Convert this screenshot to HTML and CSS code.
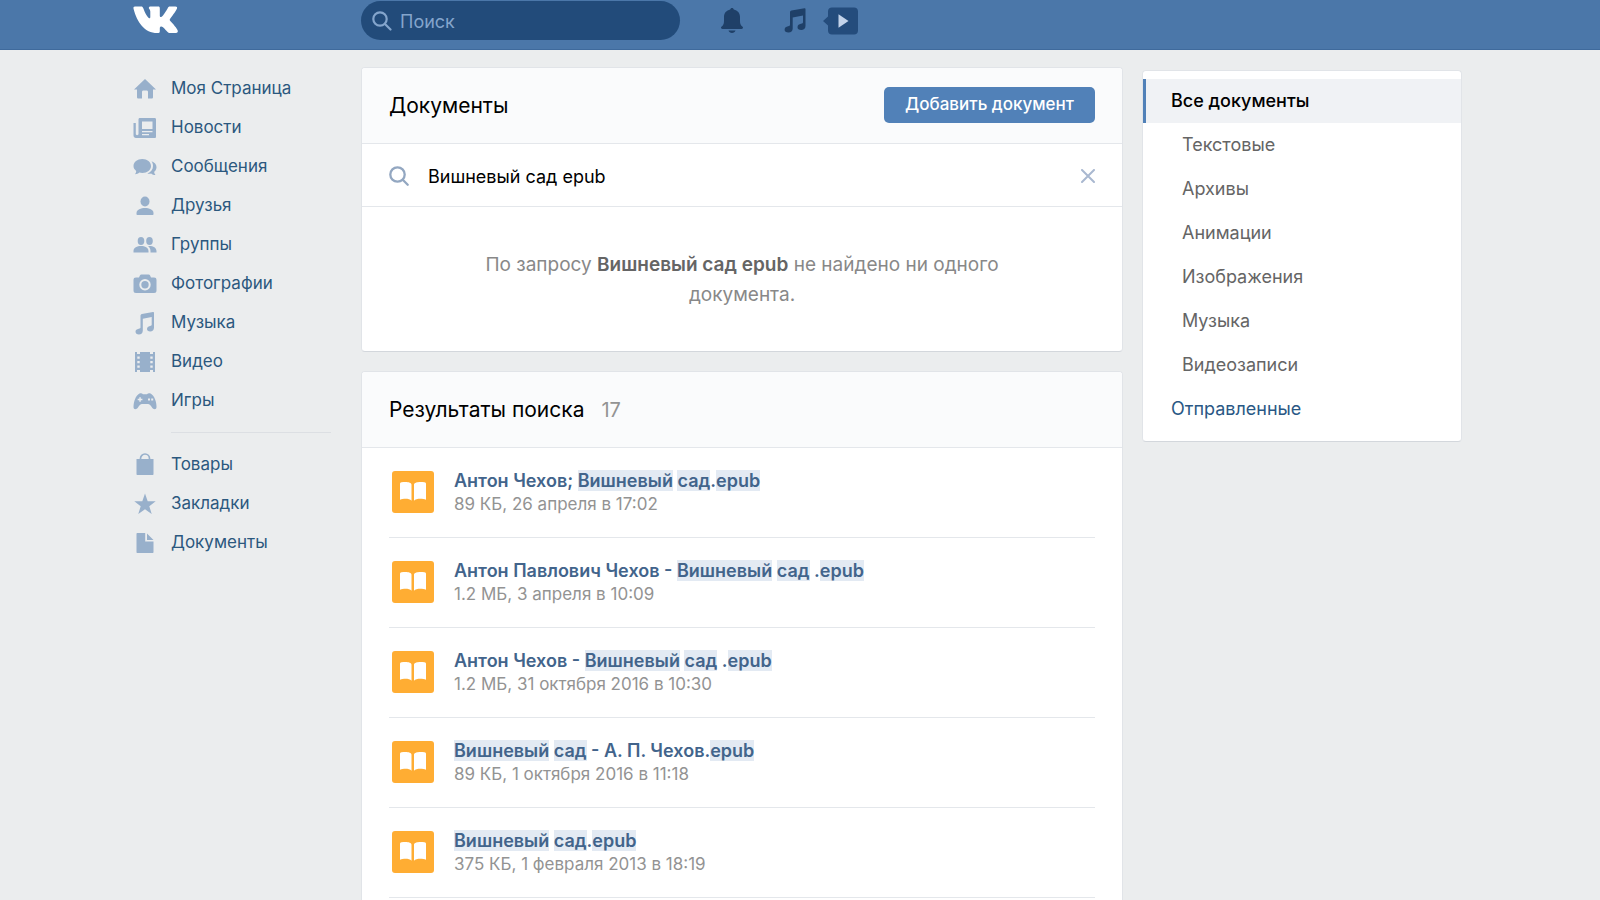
FILE: index.html
```html
<!DOCTYPE html>
<html lang="ru">
<head>
<meta charset="utf-8">
<title>Документы</title>
<link rel="stylesheet" href="styles.css">
</head>
<body>
<header class="topbar">
  <a class="logo" href="#" aria-label="ВКонтакте">
    <svg width="46" height="28" viewBox="0 0 46 28" fill="#fff"><path d="M2 0.500h6.300c1 0 1.500.500 1.900 1.600 1.700 5 4.800 10.200 6.200 10.200.600 0 .900-.400.900-1.900V5.600c-.200-2.400-1.500-2.600-1.500-3.500 0-.900.700-1.600 1.700-1.600h7.700c1.200 0 1.600.600 1.600 1.900v7c0 1.200.500 1.600.900 1.600.600 0 1.200-.400 2.300-1.600 2.500-3 4.700-7.200 4.700-7.200.400-1 1.100-1.700 2.300-1.700h5.400c1.600 0 2 .900 1.600 2-.700 2.300-6.700 10-6.700 10-.700 1-.9 1.500 0 2.600 3.200 3.300 6.500 7.200 7.400 9.500.5 1.500-.3 2.400-1.800 2.400h-6.100c-1.700 0-2.200-.9-5.200-4.200-1.500-1.600-2.500-2.300-3.200-2.300-1 0-1.600.3-1.600 2.200v2.500c0 1.300-.4 1.800-2.600 1.800C11.500 27 4.200 16.500.6 3 .200 1.300.6.500 2 .500Z"/></svg>
  </a>
  <div class="topbar-main">
    <label class="search">
      <svg width="20" height="20" viewBox="0 0 20 20" fill="none" stroke="#84a5cc" stroke-width="2.200" stroke-linecap="round"><circle cx="8" cy="8" r="6.700"/><path d="M13 13l5.500 5.500"/></svg>
      <input type="search" placeholder="Поиск" aria-label="Поиск">
    </label>
    <button class="top-btn bell" aria-label="Уведомления">
      <svg width="24" height="26" viewBox="0 0 24 26" fill="#1f4068"><path d="M12 0c1 0 1.600.600 1.800 1.500C17.500 2.300 20 5 20 9v4c0 3 .8 4.200 2 5.200.8.600 1.200 1 .9 1.800-.2.700-.7 1-1.500 1H2.600c-.8 0-1.300-.3-1.500-1-.3-.8.100-1.200.9-1.800 1.200-1 2-2.200 2-5.200V9c0-4 2.500-6.700 6.200-7.500C10.400.600 11 0 12 0ZM8.500 22.500h7c-.4 1.500-1.800 2.500-3.500 2.500s-3.100-1-3.500-2.500Z"/></svg>
    </button>
    <button class="top-btn note" aria-label="Музыка">
      <svg width="22" height="25" viewBox="0 0 22 25" fill="#1f4068"><path d="M6 4.500c0-1 .4-1.600 1.500-1.900L20.500.200c.7-.1 1 .2 1 .8V18c0 2.700-1.800 4-4.300 4-2.300 0-3.700-1-3.700-2.800 0-2 1.500-3 3.500-3.400 1.500-.3 2-.6 2-1.700V7.600L8.700 9.400V20.500c0 2.700-1.700 4-4.200 4-2.400 0-3.900-1-3.900-2.800 0-2 1.500-3 3.500-3.400 1.400-.3 1.900-.6 1.900-1.700Z"/></svg>
    </button>
    <button class="top-btn" aria-label="Воспроизвести">
      <svg width="35" height="28" viewBox="0 0 35 28"><path d="M0 14l5-4.500V4.500C5 2 6.500.500 9 .500h22c2.500 0 4 1.500 4 4v19c0 2.500-1.500 4-4 4H9c-2.500 0-4-1.500-4-4v-5Z" fill="#244c7c"/><path d="M15.500 7.300v13.400L25.500 14Z" fill="#c3d3ea"/></svg>
    </button>
  </div>
</header>

<div class="page">
  <nav class="side">
    <a href="#"><svg viewBox="0 0 24 24"><path d="M12 2l11 10.500h-3V20c0 1-.5 1.500-1.500 1.500H15V15c0-1-.5-1.500-1.500-1.500h-3C9.500 13.500 9 14 9 15v6.500H5.500C4.500 21.500 4 21 4 20v-7.500H1Z"/></svg>Моя Страница</a>
    <a href="#"><svg viewBox="0 0 24 24"><path fill-rule="evenodd" d="M7 2h14.500c1 0 1.500.5 1.500 1.500v17c0 1-.5 1.500-1.500 1.500H3c-1.500 0-2.500-1-2.500-2.500V7h2.300v11c0 1.500 2.700 1.500 2.700 0V3.500C5.500 2.500 6 2 7 2ZM9 5.500V13h10.500V5.500ZM9 15v1.300h10.500V15Zm0 3v1.300h7V18Z"/></svg>Новости</a>
    <a href="#"><svg viewBox="0 0 24 24"><path d="M9.300 4C14.300 4 18 7 18 11s-3.700 7-8.700 7c-1 0-2-.1-3-.4-1 .9-2.600 1.600-4.300 1.600.8-.9 1.200-2 1.200-3.300C1.500 14.600.5 13 .5 11 .5 7 4.300 4 9.300 4Z"/><path d="M18.500 6.200c3 .9 5 3.200 5 6 0 1.900-.9 3.400-2.300 4.600 0 1.200.5 2.300 1.300 3.200-1.700 0-3.300-.7-4.300-1.600-1.200.3-2.500.4-3.800.1 3.600-1.300 5.600-4.100 5.600-7.500 0-1.700-.5-3.400-1.500-4.800Z"/></svg>Сообщения</a>
    <a href="#"><svg viewBox="0 0 24 24"><ellipse cx="12" cy="7.500" rx="4.500" ry="5"/><path d="M3.500 19c0-3.500 4.500-5 8.500-5s8.500 1.500 8.500 5v1c0 .7-.3 1-1 1h-15c-.7 0-1-.3-1-1Z"/></svg>Друзья</a>
    <a href="#"><svg viewBox="0 0 24 24"><ellipse cx="8" cy="8" rx="3.300" ry="4"/><ellipse cx="16.500" cy="8" rx="3.300" ry="4"/><path d="M.5 18c0-3.200 3.500-5 7.500-5s7.500 1.800 7.500 5v1.500H.5ZM15 13c4.500-.5 8.500 1.500 8.500 5v1.500h-6V18c0-2-1-3.800-2.500-5Z"/></svg>Группы</a>
    <a href="#"><svg viewBox="0 0 24 24"><path fill-rule="evenodd" d="M8.500 2.500h7c.8 0 1.300.3 1.600 1L18 5.500h3c1.700 0 2.500.8 2.500 2.500v10.500c0 1.700-.8 2.500-2.500 2.500H3C1.300 21 .5 20.200.5 18.500V8C.5 6.300 1.300 5.500 3 5.500h3l.9-2c.3-.7.800-1 1.600-1ZM12 7a5.700 5.700 0 100 11.400A5.700 5.700 0 0012 7Zm0 2a3.700 3.700 0 110 7.400A3.700 3.700 0 0112 9Z"/></svg>Фотографии</a>
    <a href="#"><svg viewBox="0 0 24 24"><path d="M7.500 4.800c0-1 .4-1.500 1.400-1.800L20 1c.7-.1 1 .2 1 .8v15c0 2.400-1.600 3.600-3.800 3.600-2 0-3.200-.9-3.200-2.500s1.200-2.600 3-3c1.300-.3 1.700-.5 1.700-1.500V6L9.800 7.700v11.700c0 2.600-1.500 4-3.900 4-2.100 0-3.400-1-3.400-2.600 0-1.700 1.300-2.600 3.200-3 1.300-.3 1.800-.6 1.800-1.600Z"/></svg>Музыка</a>
    <a href="#"><svg viewBox="0 0 24 24"><path fill-rule="evenodd" d="M2 2h2v2h3V2h10v2h3V2h2v20h-2v-2h-3v2H7v-2H4v2H2Zm2.300 4.500v2.300h2.400V6.500Zm0 4.500v2.300h2.400V11Zm0 4.500v2.300h2.400v-2.300Zm13-9v2.300h2.400V6.500Zm0 4.500v2.300h2.400V11Zm0 4.500v2.300h2.400v-2.300Z"/></svg>Видео</a>
    <a href="#"><svg viewBox="0 0 24 24"><path fill-rule="evenodd" d="M6.500 4.500c1.500-.8 2.700-.2 3.500.7h4c.8-.9 2-1.500 3.500-.7C21.500 6.500 23.500 13 23.500 18c0 2.800-3 2.800-4.500.5-1.300-2-2.500-3.500-4-3.500H9c-1.500 0-2.700 1.500-4 3.500-1.500 2.300-4.500 2.300-4.500-.5C.5 13 2.500 6.500 6.500 4.500Zm-.2 3.700v1.600H4.700v1.400h1.600v1.600h1.500v-1.600h1.600V9.800H7.800V8.200Zm8.700 1.300v2h2v-2Zm3.200 0v2h2v-2Z"/></svg>Игры</a>
    <hr>
    <a href="#"><svg viewBox="0 0 24 24"><path d="M3.500 6h17v15c0 .7-.3 1-1 1h-15c-.7 0-1-.3-1-1Z"/><path d="M7.500 7V5.500a4.500 4.500 0 019 0V7" fill="none" stroke="#98b0cb" stroke-width="1.700"/></svg>Товары</a>
    <a href="#"><svg viewBox="0 0 24 24"><path d="M12 1.500l2.700 7.700 8 .1-6.400 4.900 2.400 7.800-6.700-4.700L5.300 22l2.400-7.800L1.300 9.300l8-.1Z"/></svg>Закладки</a>
    <a href="#"><svg viewBox="0 0 24 24"><path d="M4.500 2h7.700v8.500h8.300V21c0 .7-.3 1-1 1h-15c-.7 0-1-.3-1-1V3c0-.7.300-1 1-1Z"/><path d="M14 2.500L20.500 9H14Z"/></svg>Документы</a>
  </nav>

  <main class="main">
    <section class="card">
      <div class="card-head">
        <h1>Документы</h1>
        <button class="add">Добавить документ</button>
      </div>
      <div class="query">
        <svg width="20" height="20" viewBox="0 0 20 20" fill="none" stroke="#93a7c1" stroke-width="2.300" stroke-linecap="round"><circle cx="8.500" cy="8.500" r="7.200"/><path d="M14 14l4.700 4.700"/></svg>
        <input type="text" value="Вишневый сад epub" aria-label="Поиск документов">
        <button class="clear" aria-label="Очистить"><svg width="14" height="14" viewBox="0 0 14 14" fill="none" stroke="#a9b8d0" stroke-width="2" stroke-linecap="round"><path d="M1 1l12 12M13 1L1 13"/></svg></button>
      </div>
      <p class="empty">По запросу <b>Вишневый сад epub</b> не найдено ни одного<br>документа.</p>
    </section>

    <section class="card">
      <div class="card-head">
        <h2>Результаты поиска</h2><span class="count">17</span>
      </div>
      <ul class="docs">
        <li><svg class="book" viewBox="0 0 42 42"><rect width="42" height="42" rx="3" fill="#ffad33"/><path d="M8 13c0-1 .5-1.500 1.500-1.700 4-.8 10-.6 10 2.400v16c-2-2.500-8-2.500-11.500-1Z M34 13c0-1-.5-1.500-1.500-1.700-4-.8-10.500-.6-10.500 2.400v16c2-2.500 8.500-2.500 12-1Z" fill="#fff"/></svg>
          <div><a href="#">Антон Чехов; <mark>Вишневый</mark> <mark>сад</mark>.<mark>epub</mark></a><small>89 КБ, 26 апреля в 17:02</small></div></li>
        <li><svg class="book" viewBox="0 0 42 42"><rect width="42" height="42" rx="3" fill="#ffad33"/><path d="M8 13c0-1 .5-1.500 1.500-1.700 4-.8 10-.6 10 2.400v16c-2-2.500-8-2.500-11.500-1Z M34 13c0-1-.5-1.500-1.500-1.700-4-.8-10.500-.6-10.500 2.400v16c2-2.500 8.500-2.500 12-1Z" fill="#fff"/></svg>
          <div><a href="#">Антон Павлович Чехов - <mark>Вишневый</mark> <mark>сад</mark> .<mark>epub</mark></a><small>1.2 МБ, 3 апреля в 10:09</small></div></li>
        <li><svg class="book" viewBox="0 0 42 42"><rect width="42" height="42" rx="3" fill="#ffad33"/><path d="M8 13c0-1 .5-1.500 1.500-1.700 4-.8 10-.6 10 2.400v16c-2-2.500-8-2.500-11.500-1Z M34 13c0-1-.5-1.500-1.500-1.700-4-.8-10.500-.6-10.500 2.400v16c2-2.500 8.500-2.500 12-1Z" fill="#fff"/></svg>
          <div><a href="#">Антон Чехов - <mark>Вишневый</mark> <mark>сад</mark> .<mark>epub</mark></a><small>1.2 МБ, 31 октября 2016 в 10:30</small></div></li>
        <li><svg class="book" viewBox="0 0 42 42"><rect width="42" height="42" rx="3" fill="#ffad33"/><path d="M8 13c0-1 .5-1.500 1.500-1.700 4-.8 10-.6 10 2.400v16c-2-2.500-8-2.500-11.500-1Z M34 13c0-1-.5-1.500-1.500-1.700-4-.8-10.500-.6-10.500 2.400v16c2-2.500 8.500-2.500 12-1Z" fill="#fff"/></svg>
          <div><a href="#"><mark>Вишневый</mark> <mark>сад</mark> - А. П. Чехов.<mark>epub</mark></a><small>89 КБ, 1 октября 2016 в 11:18</small></div></li>
        <li><svg class="book" viewBox="0 0 42 42"><rect width="42" height="42" rx="3" fill="#ffad33"/><path d="M8 13c0-1 .5-1.500 1.500-1.700 4-.8 10-.6 10 2.400v16c-2-2.500-8-2.500-11.500-1Z M34 13c0-1-.5-1.500-1.500-1.700-4-.8-10.500-.6-10.500 2.400v16c2-2.500 8.500-2.500 12-1Z" fill="#fff"/></svg>
          <div><a href="#"><mark>Вишневый</mark> <mark>сад</mark>.<mark>epub</mark></a><small>375 КБ, 1 февраля 2013 в 18:19</small></div></li>
      </ul>
    </section>
  </main>

  <nav class="card filter" aria-label="Типы документов">
    <a class="active" href="#">Все документы</a>
    <a class="sub" href="#">Текстовые</a>
    <a class="sub" href="#">Архивы</a>
    <a class="sub" href="#">Анимации</a>
    <a class="sub" href="#">Изображения</a>
    <a class="sub" href="#">Музыка</a>
    <a class="sub" href="#">Видеозаписи</a>
    <a class="sent" href="#">Отправленные</a>
  </nav>
</div>
</body>
</html>
```
FILE: styles.css
```css
* { box-sizing: border-box; }
body {
  margin: 0;
  background: #ebedee;
  font-family: Inter, Roboto, "Liberation Sans", sans-serif;
  font-size: 18px;
  line-height: 23px;
  color: #000;
}
a { text-decoration: none; color: inherit; }
button, input { font: inherit; border: 0; background: none; padding: 0; margin: 0; }
button { cursor: pointer; }
svg { display: block; flex: none; }

.topbar {
  display: flex;
  height: 50px;
  padding: 0 138px 0 133px;
  background: #4b77a9;
  border-bottom: 1px solid #3f6a9c;
}
.logo { width: 228px; padding-top: 6px; }
.topbar-main { display: flex; align-items: center; height: 41px; }
.search {
  display: flex;
  align-items: center;
  gap: 8px;
  width: 319px;
  height: 39px;
  margin-right: 40px;
  padding: 1px 20px 0 11px;
  border-radius: 20px;
  background: #224b7a;
}
.search input { flex: 1; min-width: 0; color: #fff; outline: none; }
.search input::placeholder { color: #84a5cc; opacity: 1; }
.bell { margin-right: 40px; }
.note { margin-right: 17px; }

.page {
  display: flex;
  align-items: flex-start;
  padding: 17px 138px 0 133px;
}
.side { width: 228px; padding-top: 2px; font-size: 17px; color: #2b587e; }
.side a { display: flex; align-items: center; gap: 14px; height: 39px; }
.side svg { width: 24px; height: 24px; fill: #98b0cb; }
.side hr { margin: 12px 30px 12px 38px; border: 0; border-top: 1px solid #dcdfe3; }

.main { flex: 1; min-width: 0; margin-right: 19px; }
.card {
  background: #fff;
  border: 1px solid #e1e4e8;
  border-bottom-color: #d3d7dc;
  border-radius: 4px;
}
.main .card { margin-bottom: 19px; }
.card-head {
  display: flex;
  align-items: center;
  height: 76px;
  padding: 0 27px;
  border-bottom: 1px solid #e4e7eb;
  border-radius: 3px 3px 0 0;
  background: #fafbfc;
}
h1, h2 { margin: 0; font-size: 21px; font-weight: 400; line-height: 30px; }
.count { margin-left: 17px; font-size: 20px; line-height: 30px; color: #939393; }
.add {
  height: 36px;
  margin: 0 0 2px auto;
  padding: 0 21px;
  border-radius: 5px;
  background: #5181b8;
  color: #fff;
  font-size: 17px;
  font-weight: 500;
}
.query {
  display: flex;
  align-items: center;
  height: 63px;
  padding: 2px 27px 0;
  border-bottom: 1px solid #e4e7eb;
}
.query input { flex: 1; min-width: 0; margin-left: 19px; outline: none; }
.empty {
  max-width: 600px;
  margin: 0 auto;
  padding: 43px 20px 41px;
  font-size: 19px;
  line-height: 30px;
  text-align: center;
  color: #888;
}
.empty b { font-weight: 600; color: #656565; }

.docs { list-style: none; margin: 0; padding: 0 27px 27px; }
.docs li { display: flex; height: 90px; padding: 21px 0 0 3px; border-bottom: 1px solid #e4e7eb; }
.book { width: 42px; height: 42px; margin-top: 2px; }
.docs div { margin-left: 20px; }
.docs a { display: block; font-weight: 600; color: #42648b; }
.docs small { display: block; font-size: 17px; line-height: 24px; color: #939393; }
mark { color: inherit; background: #e3eaf3; }

.filter { width: 320px; margin-top: 3px; padding: 8px 0 10px; }
.filter a { display: block; height: 44px; padding-left: 28px; line-height: 44px; color: #656565; }
.filter .active {
  padding-left: 25px;
  border-left: 3px solid #5181b8;
  background: #f0f2f5;
  color: #000;
  font-weight: 500;
}
.filter .sub { padding-left: 39px; }
.filter .sent { color: #2a5885; }
```
